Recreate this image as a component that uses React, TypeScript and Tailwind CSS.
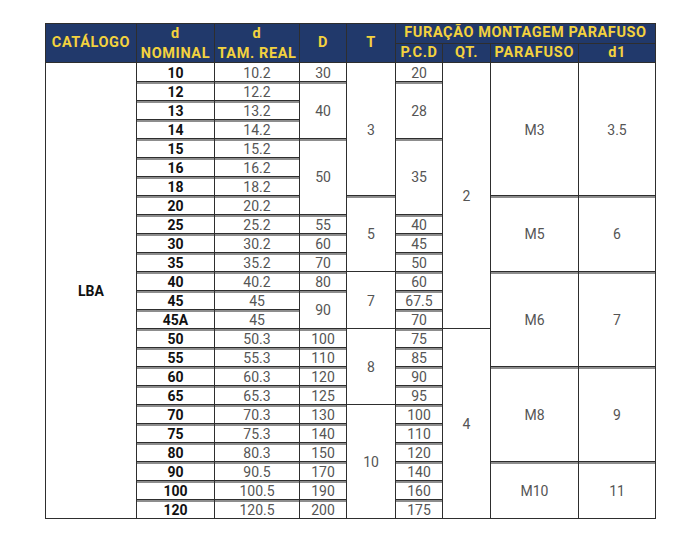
import React from "react";

type C = { t: string; cls?: string; kind: "nom" | "num" | "dbl" | "lba" };

const H = "bg-[#21396b] text-[#f3d23e] font-bold text-[14.5px] tracking-[0.6px] flex items-center justify-center leading-none";

function Cell({ c }: { c: C }) {
  const base = "bg-white flex items-center justify-center leading-none pt-[1px]";
  let extra = "";
  if (c.kind === "nom") extra = "font-bold text-[14px] text-[#111] shadow-[inset_0_2px_0_#8d8d8d]";
  if (c.kind === "dbl") extra = "text-[14px] text-[#555] shadow-[inset_0_2px_0_#8d8d8d]";
  if (c.kind === "num") extra = "text-[14px] text-[#555]";
  if (c.kind === "lba") extra = "font-bold text-[14px] text-[#111]";
  return <div className={`${base} ${extra} ${c.cls ?? ""}`}>{c.t}</div>;
}

const rows: C[][] = [
  [
    { t: "LBA", kind: "lba", cls: "row-span-24" },
    { t: "10", kind: "nom", cls: "shadow-none" },
    { t: "10.2", kind: "num" },
    { t: "30", kind: "num" },
    { t: "3", kind: "num", cls: "row-span-7" },
    { t: "20", kind: "num" },
    { t: "2", kind: "num", cls: "row-span-14" },
    { t: "M3", kind: "num", cls: "row-span-7" },
    { t: "3.5", kind: "num", cls: "row-span-7" },
  ],
  [
    { t: "12", kind: "nom" },
    { t: "12.2", kind: "dbl" },
    { t: "40", kind: "dbl", cls: "row-span-3" },
    { t: "28", kind: "dbl", cls: "row-span-3" },
  ],
  [
    { t: "13", kind: "nom" },
    { t: "13.2", kind: "dbl" },
  ],
  [
    { t: "14", kind: "nom" },
    { t: "14.2", kind: "dbl" },
  ],
  [
    { t: "15", kind: "nom" },
    { t: "15.2", kind: "dbl" },
    { t: "50", kind: "dbl", cls: "row-span-4" },
    { t: "35", kind: "dbl", cls: "row-span-4" },
  ],
  [
    { t: "16", kind: "nom" },
    { t: "16.2", kind: "dbl" },
  ],
  [
    { t: "18", kind: "nom" },
    { t: "18.2", kind: "dbl" },
  ],
  [
    { t: "20", kind: "nom" },
    { t: "20.2", kind: "dbl" },
    { t: "5", kind: "dbl", cls: "row-span-4" },
    { t: "M5", kind: "dbl", cls: "row-span-4" },
    { t: "6", kind: "dbl", cls: "row-span-4" },
  ],
  [
    { t: "25", kind: "nom" },
    { t: "25.2", kind: "dbl" },
    { t: "55", kind: "dbl" },
    { t: "40", kind: "dbl" },
  ],
  [
    { t: "30", kind: "nom" },
    { t: "30.2", kind: "dbl" },
    { t: "60", kind: "dbl" },
    { t: "45", kind: "dbl" },
  ],
  [
    { t: "35", kind: "nom" },
    { t: "35.2", kind: "dbl" },
    { t: "70", kind: "dbl" },
    { t: "50", kind: "dbl" },
  ],
  [
    { t: "40", kind: "nom" },
    { t: "40.2", kind: "dbl" },
    { t: "80", kind: "dbl" },
    { t: "7", kind: "num", cls: "row-span-3" },
    { t: "60", kind: "dbl" },
    { t: "M6", kind: "dbl", cls: "row-span-5" },
    { t: "7", kind: "dbl", cls: "row-span-5" },
  ],
  [
    { t: "45", kind: "nom" },
    { t: "45", kind: "dbl" },
    { t: "90", kind: "dbl", cls: "row-span-2" },
    { t: "67.5", kind: "dbl" },
  ],
  [
    { t: "45A", kind: "nom" },
    { t: "45", kind: "dbl" },
    { t: "70", kind: "dbl" },
  ],
  [
    { t: "50", kind: "nom" },
    { t: "50.3", kind: "dbl" },
    { t: "100", kind: "dbl" },
    { t: "8", kind: "num", cls: "row-span-4" },
    { t: "75", kind: "dbl" },
    { t: "4", kind: "num", cls: "row-span-10" },
  ],
  [
    { t: "55", kind: "nom" },
    { t: "55.3", kind: "dbl" },
    { t: "110", kind: "dbl" },
    { t: "85", kind: "dbl" },
  ],
  [
    { t: "60", kind: "nom" },
    { t: "60.3", kind: "dbl" },
    { t: "120", kind: "dbl" },
    { t: "90", kind: "dbl" },
    { t: "M8", kind: "dbl", cls: "row-span-5" },
    { t: "9", kind: "dbl", cls: "row-span-5" },
  ],
  [
    { t: "65", kind: "nom" },
    { t: "65.3", kind: "dbl" },
    { t: "125", kind: "dbl" },
    { t: "95", kind: "dbl" },
  ],
  [
    { t: "70", kind: "nom" },
    { t: "70.3", kind: "dbl" },
    { t: "130", kind: "dbl" },
    { t: "10", kind: "num", cls: "row-span-6" },
    { t: "100", kind: "dbl" },
  ],
  [
    { t: "75", kind: "nom" },
    { t: "75.3", kind: "dbl" },
    { t: "140", kind: "dbl" },
    { t: "110", kind: "dbl" },
  ],
  [
    { t: "80", kind: "nom" },
    { t: "80.3", kind: "dbl" },
    { t: "150", kind: "dbl" },
    { t: "120", kind: "dbl" },
  ],
  [
    { t: "90", kind: "nom" },
    { t: "90.5", kind: "dbl" },
    { t: "170", kind: "dbl" },
    { t: "140", kind: "dbl" },
    { t: "M10", kind: "dbl", cls: "row-span-3" },
    { t: "11", kind: "dbl", cls: "row-span-3" },
  ],
  [
    { t: "100", kind: "nom" },
    { t: "100.5", kind: "dbl" },
    { t: "190", kind: "dbl" },
    { t: "160", kind: "dbl" },
  ],
  [
    { t: "120", kind: "nom" },
    { t: "120.5", kind: "dbl" },
    { t: "200", kind: "dbl" },
    { t: "175", kind: "dbl" },
  ],
];

export default function App() {
  return (
    <div className="w-[700px] h-[550px] bg-white pt-[23px] pl-[45px] font-['Roboto','Liberation_Sans',sans-serif]">
      <div className="grid w-max grid-cols-[90px_77px_84px_46px_48px_46px_47px_87px_76px] grid-rows-[19px_18px_repeat(24,18px)] gap-px bg-[#2e2e2e] border border-[#2e2e2e]">
        <div className={`${H} row-span-2`}>CATÁLOGO</div>
        <div className={`${H} row-span-2 flex-col gap-[5px] pt-[2px]`}>
          <span>d</span>
          <span>NOMINAL</span>
        </div>
        <div className={`${H} row-span-2 flex-col gap-[5px] pt-[2px]`}>
          <span>d</span>
          <span>TAM. REAL</span>
        </div>
        <div className={`${H} row-span-2`}>D</div>
        <div className={`${H} row-span-2`}>T</div>
        <div className={`${H} col-span-4 tracking-[0.4px]`}>FURAÇÃO MONTAGEM PARAFUSO</div>
        <div className={H}>P.C.D</div>
        <div className={H}>QT.</div>
        <div className={`${H} tracking-[0.8px]`}>PARAFUSO</div>
        <div className={H}>d1</div>
        {rows.flat().map((c, i) => (
          <Cell key={i} c={c} />
        ))}
      </div>
    </div>
  );
}
